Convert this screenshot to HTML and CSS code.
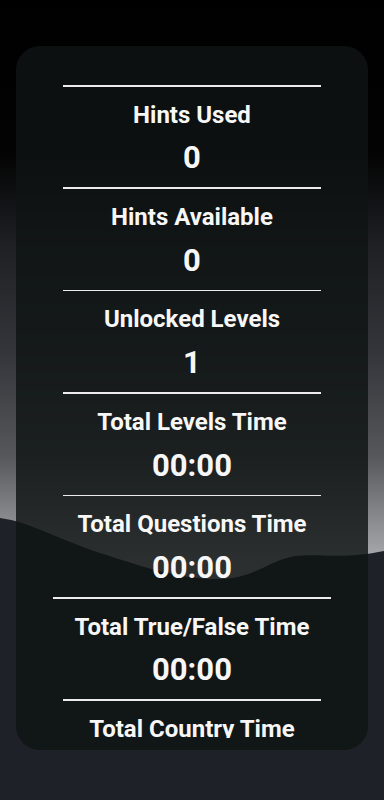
FILE: index.html
```html
<!DOCTYPE html>
<html lang="en">
<head>
<meta charset="utf-8">
<meta name="viewport" content="width=device-width, initial-scale=1">
<title>Statistics</title>
<link rel="stylesheet" href="styles.css">
</head>
<body>
<div class="backdrop">
  <svg class="hills" viewBox="0 0 384 800" preserveAspectRatio="none" aria-hidden="true">
    <path d="M0 518 C 30 522, 60 540, 100 553 C 140 566, 180 580, 220 579 C 255 578, 270 560, 295 556 C 320 553, 340 560, 384 551 L 384 800 L 0 800 Z" fill="#1f2128"/>
  </svg>
</div>
<main class="card">
  <div class="list">
    <section class="stat">
      <div class="divider"></div>
      <h2 class="label">Hints Used</h2>
      <p class="value">0</p>
    </section>
    <section class="stat">
      <div class="divider"></div>
      <h2 class="label">Hints Available</h2>
      <p class="value">0</p>
    </section>
    <section class="stat">
      <div class="divider"></div>
      <h2 class="label">Unlocked Levels</h2>
      <p class="value">1</p>
    </section>
    <section class="stat">
      <div class="divider"></div>
      <h2 class="label">Total Levels Time</h2>
      <p class="value">00:00</p>
    </section>
    <section class="stat">
      <div class="divider"></div>
      <h2 class="label">Total Questions Time</h2>
      <p class="value">00:00</p>
    </section>
    <section class="stat">
      <div class="divider divider-wide"></div>
      <h2 class="label">Total True/False Time</h2>
      <p class="value">00:00</p>
    </section>
    <section class="stat">
      <div class="divider"></div>
      <h2 class="label">Total Country Time</h2>
    </section>
  </div>
</main>
</body>
</html>
```
FILE: styles.css
```css
* {
  box-sizing: border-box;
}

html, body {
  margin: 0;
  padding: 0;
}

body {
  width: 384px;
  height: 800px;
  overflow: hidden;
  position: relative;
  font-family: Roboto, "Liberation Sans", sans-serif;
  color: #f7f7f7;
  background: linear-gradient(to bottom,
    #000000 0%,
    #030303 19%,
    #1f2125 31%,
    #33353a 44%,
    #55575b 57%,
    #8a8b8f 65%,
    #a9aaac 70%);
}

.backdrop {
  position: absolute;
  inset: 0;
  z-index: 0;
}

.hills {
  display: block;
  width: 100%;
  height: 100%;
}

.card {
  position: relative;
  z-index: 1;
  margin: 46px 16px 0;
  height: 704px;
  border-radius: 24px;
  background: rgba(15, 20, 20, 0.82);
  padding: 39px 0 12px;
  display: flex;
  flex-direction: column;
}

.list {
  flex: 1;
  overflow: hidden;
  display: flex;
  flex-direction: column;
}

.stat {
  display: flex;
  flex-direction: column;
  align-items: center;
  padding-bottom: 11px;
}

.divider {
  flex: none;
  width: 258px;
  height: 1.6px;
  background: #ececec;
  margin-bottom: 14px;
}

.divider-wide {
  width: 278px;
}

.label {
  margin: 0;
  font-size: 24px;
  line-height: 28px;
  font-weight: 700;
  text-align: center;
  white-space: nowrap;
}

.value {
  margin: 11.8px 0 0;
  font-size: 31px;
  line-height: 36px;
  font-weight: 700;
  text-align: center;
}
```
